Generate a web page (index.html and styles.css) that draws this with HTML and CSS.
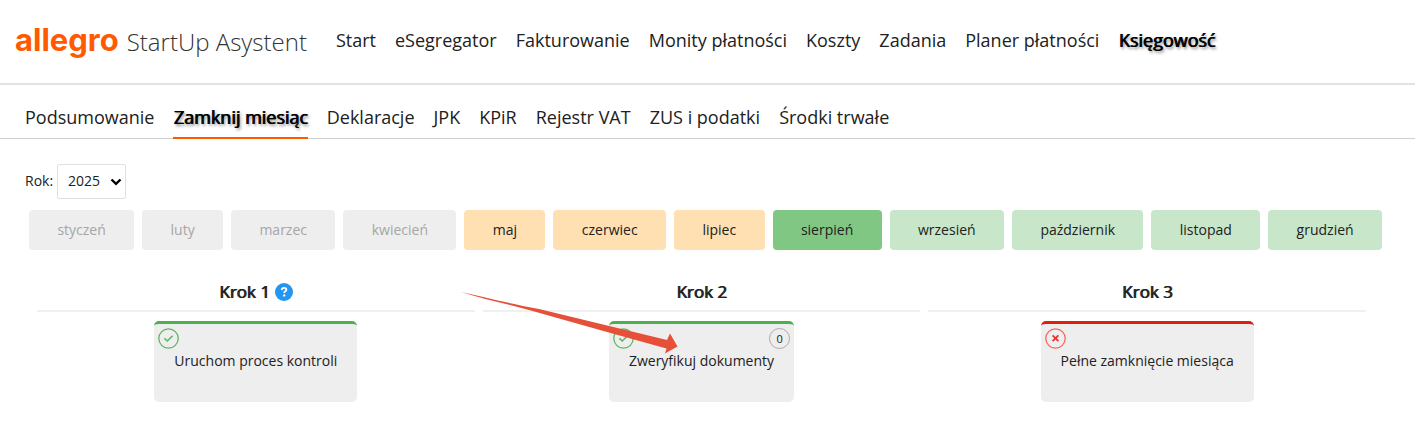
FILE: index.html
```html
<!DOCTYPE html>
<html lang="pl">
<head>
<meta charset="utf-8">
<meta name="viewport" content="width=device-width, initial-scale=1">
<title>Zamknij miesiąc - StartUp Asystent</title>
<link rel="stylesheet" href="styles.css">
</head>
<body>

<header class="header">
	<a class="logo" href="#">
		<span class="logo-brand">allegro</span>
		<span class="logo-name">StartUp Asystent</span>
	</a>
	<nav class="menu">
		<a href="#">Start</a>
		<a href="#">eSegregator</a>
		<a href="#">Fakturowanie</a>
		<a href="#">Monity płatności</a>
		<a href="#">Koszty</a>
		<a href="#">Zadania</a>
		<a href="#">Planer płatności</a>
		<a href="#" class="active">Księgowość</a>
	</nav>
</header>

<nav class="menu submenu">
	<a href="#">Podsumowanie</a>
	<a href="#" class="active">Zamknij miesiąc</a>
	<a href="#">Deklaracje</a>
	<a href="#">JPK</a>
	<a href="#">KPiR</a>
	<a href="#">Rejestr VAT</a>
	<a href="#">ZUS i podatki</a>
	<a href="#">Środki trwałe</a>
</nav>

<main>
	<div class="year">
		<label for="year">Rok:</label>
		<div class="select">
			<select id="year">
				<option>2025</option>
			</select>
			<svg class="chevron" width="12" height="8" viewBox="0 0 12 8"><path d="M1.5 1.5L6 5.8L10.5 1.5" fill="none" stroke="#000" stroke-width="2.4"/></svg>
		</div>
	</div>

	<div class="months">
		<button class="month" disabled>styczeń</button>
		<button class="month" disabled>luty</button>
		<button class="month" disabled>marzec</button>
		<button class="month" disabled>kwiecień</button>
		<button class="month open">maj</button>
		<button class="month open">czerwiec</button>
		<button class="month open">lipiec</button>
		<button class="month current">sierpień</button>
		<button class="month next">wrzesień</button>
		<button class="month next">październik</button>
		<button class="month next">listopad</button>
		<button class="month next">grudzień</button>
	</div>

	<div class="steps">
		<section class="step">
			<h2>Krok 1
				<svg class="help" width="18" height="18" viewBox="0 0 18 18"><circle cx="9" cy="9" r="9" fill="#2196f3"/><path d="M6.7 7.1C6.8 5.5 7.8 4.9 9.1 4.9C10.5 4.9 11.4 5.7 11.4 6.8C11.4 8.3 9.2 8.3 9.2 10" fill="none" stroke="#fff" stroke-width="1.8"/><circle cx="9.2" cy="12.4" r="1.2" fill="#fff"/></svg>
			</h2>
			<button class="card done">
				<svg class="status" width="21" height="21" viewBox="0 0 21 21" fill="none" stroke="#5cb860"><circle cx="10.5" cy="10.5" r="9.7" stroke-width="1.3"/><path d="M6.4 10.4L9.3 13L14.6 7.8" stroke-width="1.6"/></svg>
				Uruchom proces kontroli
			</button>
		</section>
		<section class="step">
			<h2>Krok 2</h2>
			<button class="card done">
				<svg class="status" width="21" height="21" viewBox="0 0 21 21" fill="none" stroke="#5cb860"><circle cx="10.5" cy="10.5" r="9.7" stroke-width="1.3"/><path d="M6.4 10.4L9.3 13L14.6 7.8" stroke-width="1.6"/></svg>
				<span class="count">0</span>
				Zweryfikuj dokumenty
			</button>
			<svg class="arrow" width="217" height="63" viewBox="0 0 217 63"><path d="M0 0C22 5 47 11 78 17L206 48L209 41.500L216.500 54.500L204 61.500L205.500 56.500L146 40L68 18C46 12 22 7 0 0Z" fill="#e64f38"/></svg>
		</section>
		<section class="step">
			<h2>Krok 3</h2>
			<button class="card error">
				<svg class="status" width="21" height="21" viewBox="0 0 21 21" fill="none" stroke="#f2685f"><circle cx="10.5" cy="10.5" r="9.7" stroke-width="1.3"/><path d="M7.600 7.400L13.400 13.200M13.400 7.400L7.600 13.200" stroke="#e03a30" stroke-width="1.800"/></svg>
				Pełne zamknięcie miesiąca
			</button>
		</section>
	</div>
</main>

</body>
</html>
```
FILE: styles.css
```css
* {
	box-sizing: border-box;
}
body {
	margin: 0;
	background: #fff;
	color: #212121;
	font-family: "Open Sans", "Noto Sans", sans-serif;
	font-size: 14px;
}
a {
	color: inherit;
	text-decoration: none;
}
button, select {
	font: inherit;
	color: inherit;
}

/* header */
.header {
	display: flex;
	align-items: center;
	gap: 29px;
	height: 85px;
	padding: 0 15px 4px;
	border-bottom: 2px solid #e2e2e2;
}
.logo {
	display: flex;
	align-items: baseline;
	gap: 8px;
	white-space: nowrap;
}
.logo-brand {
	color: #ff5a00;
	font-family: Inter, sans-serif;
	font-size: 31px;
	font-weight: 700;
}
.logo-name {
	color: #333;
	font-size: 24px;
	font-weight: 300;
}
.menu {
	display: flex;
	gap: 19px;
	font-size: 18px;
	line-height: 24px;
	white-space: nowrap;
}
.menu .active {
	color: #000;
	text-shadow: 1px 0 0 #000, 2px 2px 3px rgba(0, 0, 0, .5);
}
.submenu {
	padding: 20px 25px 0;
	border-bottom: 1px solid #d0d0d0;
}
.submenu a {
	margin-bottom: -1px;
	padding-bottom: 8px;
	border-bottom: 2px solid transparent;
}
.submenu .active {
	border-bottom-color: #ff5a00;
}

/* year */
.year {
	display: flex;
	align-items: center;
	gap: 4px;
	padding: 25px 25px 0;
}
.year label {
	padding-bottom: 2px;
}
.select {
	position: relative;
}
.select select {
	appearance: none;
	width: 69px;
	height: 35px;
	padding: 0 10px 2px;
	border: 1px solid #e0e0e0;
	border-radius: 2px;
	background: #fff;
}
.chevron {
	position: absolute;
	right: 4px;
	top: 14px;
	pointer-events: none;
}

/* months */
.months {
	display: flex;
	gap: 8px;
	padding: 11px 33px 0 29px;
}
.month {
	flex: 1 1 auto;
	height: 40px;
	padding: 0 27px 2px;
	border: 0;
	border-radius: 4px;
	background: #eee;
}
.month:disabled {
	color: #a6a6a6;
}
.month.open {
	background: #ffe0b2;
}
.month.current {
	background: #81c784;
}
.month.next {
	background: #c8e6c9;
}

/* steps */
.steps {
	display: grid;
	grid-template-columns: repeat(3, 1fr);
	gap: 8px;
	padding: 30px 49px 20px 37px;
}
.step {
	position: relative;
	text-align: center;
}
.step h2 {
	display: flex;
	justify-content: center;
	align-items: center;
	gap: 5px;
	margin: 0 0 9px;
	padding-bottom: 6px;
	border-bottom: 2px solid #f0f0f0;
	font-size: 17px;
	font-weight: 400;
	line-height: 24px;
	text-shadow: 1px 0 0 #212121;
}
.card {
	position: relative;
	height: 81px;
	padding: 0 20px 6px;
	border: 0;
	border-top: 3px solid #4caf50;
	border-radius: 5px;
	background: #eee;
}
.card.error {
	border-top-color: #e0200c;
}
.status {
	position: absolute;
	left: 4px;
	top: 4px;
}
.count {
	position: absolute;
	right: 4px;
	top: 4px;
	width: 21px;
	height: 21px;
	border: 1px solid #aaa;
	border-radius: 50%;
	font-size: 11px;
	line-height: 19px;
}
.arrow {
	position: absolute;
	left: -22px;
	top: 12px;
	pointer-events: none;
}
```
